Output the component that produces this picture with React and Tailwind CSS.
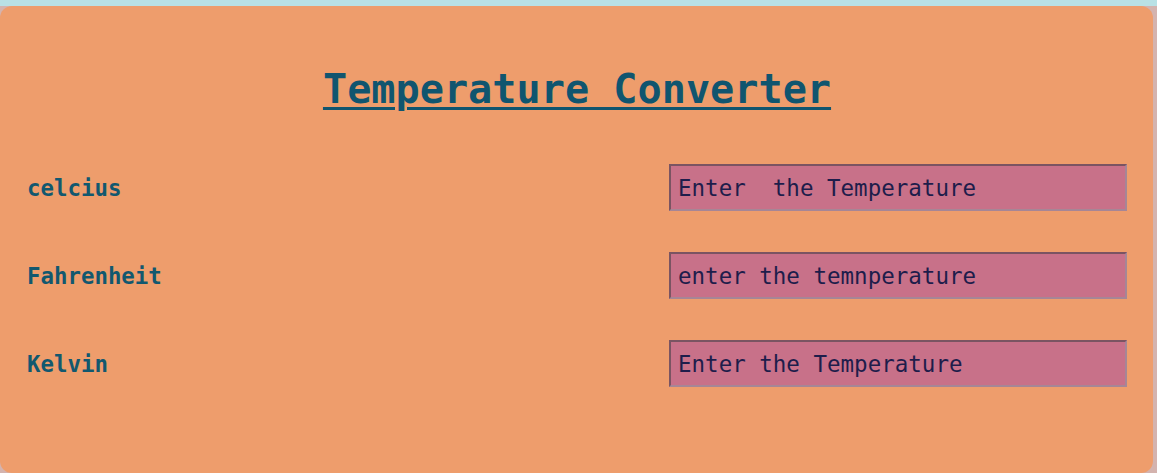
import React, { useState } from "react";

const rows = [
  { label: "celcius", value: "Enter  the Temperature" },
  { label: "Fahrenheit", value: "enter the temnperature" },
  { label: "Kelvin", value: "Enter the Temperature" },
];

const App = () => {
  const [values, setValues] = useState(rows.map(r => r.value));

  const update = (i, v) => {
    const next = [...values];
    next[i] = v;
    setValues(next);
  };

  return (
    <div className="min-h-screen bg-[#b9e1e5] pt-[6px] font-['DejaVu_Sans_Mono',monospace]">
      <div className="bg-[#d4b3ae] h-[467px]">
        <div className="w-[1153px] h-[467px] bg-[#ee9d6c] rounded-xl pt-[60px] pl-[27px] pr-[26px]">
          <h1 className="text-center text-[40.2px] leading-[46px] font-bold text-[#10556f] underline decoration-[3px] underline-offset-[4px]">
            Temperature Converter
          </h1>
          <div className="mt-[52px] flex flex-col gap-[41px]">
            {rows.map((r, i) => (
              <div key={r.label} className="flex items-center justify-between">
                <label className="pt-[3px] text-[22.4px] font-bold text-[#12586f]">{r.label}</label>
                <input
                  type="text"
                  value={values[i]}
                  onChange={e => update(i, e.target.value)}
                  className="w-[458px] h-[47px] pl-[7px] pr-2 text-[22.5px] text-[#1e1d4b] bg-[#c87189] border-2 border-t-[#7a5462] border-l-[#7a5462] border-b-[#a68696] border-r-[#a68696] outline-none font-['DejaVu_Sans_Mono',monospace]"
                />
              </div>
            ))}
          </div>
        </div>
      </div>
    </div>
  );
};

export default App;
